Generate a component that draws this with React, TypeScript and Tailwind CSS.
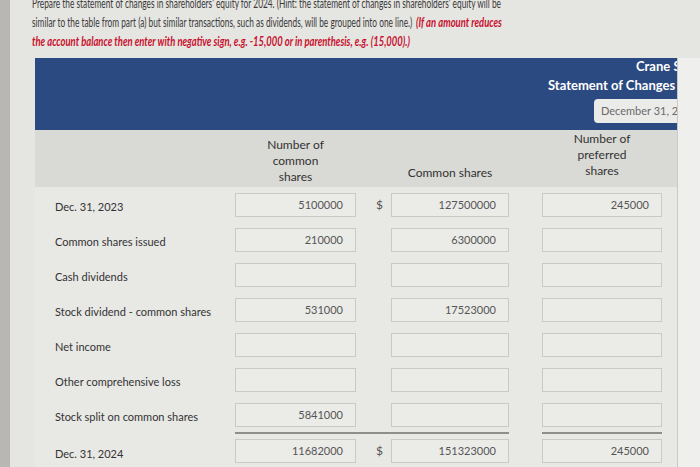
const rows = [
  { label: "Dec. 31, 2023", a: "5100000", b: "127500000", c: "245000", dollar: true },
  { label: "Common shares issued", a: "210000", b: "6300000", c: "" },
  { label: "Cash dividends", a: "", b: "", c: "" },
  { label: "Stock dividend - common shares", a: "531000", b: "17523000", c: "" },
  { label: "Net income", a: "", b: "", c: "" },
  { label: "Other comprehensive loss", a: "", b: "", c: "" },
  { label: "Stock split on common shares", a: "5841000", b: "", c: "" },
];

function Box({ value }: { value: string }) {
  return (
    <div className="h-[24px] border border-[#c9c9c5] bg-[#ebebe8] pr-[12px] text-right text-[11px] leading-[22px] text-[#555]">
      {value}
    </div>
  );
}

const grid = "grid grid-cols-[200px_121px_35px_118px_33px_120px] items-center";

export default function App() {
  return (
    <div className="grid h-[467px] w-[700px] grid-cols-[10px_690px] overflow-hidden bg-[#e5e5e1] font-['Lato',sans-serif]">
      <div className="bg-[#b8b7b3]" />
      <div className="flex min-w-0 flex-col overflow-hidden">
        {/* instructions, condensed like the photo */}
        <div className="-mt-[6px] overflow-hidden whitespace-nowrap pl-[22px] text-[13px] leading-[19px] text-[#3a3a3a]">
          <p className="origin-left scale-x-[0.64]">
            Prepare the statement of changes in shareholders' equity for 2024. (Hint: the statement of changes in shareholders' equity will be
          </p>
          <div className="flex">
            <span className="w-[384px] shrink-0">
              <span className="inline-block origin-left scale-x-[0.64]">
                similar to the table from part (a) but similar transactions, such as dividends, will be grouped into one line.)
              </span>
            </span>
            <span className="inline-block origin-left scale-x-[0.7] text-[13.5px] font-bold italic text-[#c8102e]">
              (If an amount reduces
            </span>
          </div>
          <p className="origin-left scale-x-[0.7] text-[13.5px] font-bold italic text-[#c8102e]">
            the account balance then enter with negative sign, e.g. -15,000 or in parenthesis, e.g. (15,000).)
          </p>
        </div>

        <div className="mt-[10px] grid flex-1 grid-cols-[25px_642px_1px_22px]">
          <div />
          <div className="min-w-0 overflow-hidden bg-[#e8e8e5]">
            <div className="flex h-[72px] bg-[#2c4a82] pl-[513px] text-[13px] font-bold text-white">
              <div className="w-[129px] overflow-hidden">
                <p className="whitespace-nowrap pl-[88px] leading-[16px]">Crane Shipping Limited</p>
                <p className="mt-[3px] whitespace-nowrap leading-[16px]">Statement of Changes in Shareholders' Equity</p>
                <div className="ml-[46px] mt-[6px] h-[24px] w-[200px] rounded-[4px] bg-[#ebebe9] pl-[7px] text-[11px] font-normal leading-[24px] text-[#6a6a6a]">
                  December 31, 2024
                </div>
              </div>
            </div>

            <div className={`${grid} h-[57px] bg-[#d9d9d5] text-center text-[12px] leading-[16px] text-[#333]`}>
              <div />
              <div className="mt-[4px]">
                Number of
                <br />
                common
                <br />
                shares
              </div>
              <div />
              <div className="mt-[28px]">Common shares</div>
              <div />
              <div className="-mt-[8px]">
                Number of
                <br />
                preferred
                <br />
                shares
              </div>
            </div>

            {rows.map((r) => (
              <div key={r.label} className={`${grid} h-[35px]`}>
                <div className="pl-[20px] pt-[6px] text-[11px] text-[#333]">{r.label}</div>
                <Box value={r.a} />
                <div className="pr-[8px] text-right text-[12px] text-[#555]">{r.dollar ? "$" : ""}</div>
                <Box value={r.b} />
                <div />
                <Box value={r.c} />
              </div>
            ))}

            <div className={`${grid} h-[35px]`}>
              <div className="pl-[20px] pt-[10px] text-[11px] text-[#333]">Dec. 31, 2024</div>
              <div className="flex h-full flex-col justify-center border-t-2 border-[#8e8e8a]">
                <Box value="11682000" />
              </div>
              <div className="flex h-full items-center justify-end border-t-2 border-[#8e8e8a] pr-[8px] text-[12px] text-[#555]">
                $
              </div>
              <div className="flex h-full flex-col justify-center border-t-2 border-[#8e8e8a]">
                <Box value="151323000" />
              </div>
              <div />
              <div className="flex h-full flex-col justify-center border-t-2 border-[#8e8e8a]">
                <Box value="245000" />
              </div>
            </div>
          </div>
          <div className="bg-[#c9c9c5]" />
          <div className="bg-[#efefed]" />
        </div>
      </div>
    </div>
  );
}
